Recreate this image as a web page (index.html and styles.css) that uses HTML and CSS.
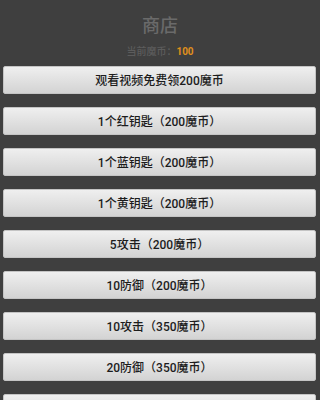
FILE: index.html
```html
<!DOCTYPE html>
<html lang="zh-CN">
<head>
<meta charset="utf-8">
<title>商店</title>
<link rel="stylesheet" href="styles.css">
</head>
<body>
<div class="shop">
  <header class="head">
    <h1 class="title">商店</h1>
    <p class="coins">当前魔币：<span class="amount">100</span></p>
  </header>
  <div class="list">
    <button class="item">观看视频免费领200魔币</button>
    <button class="item">1个红钥匙（200魔币）</button>
    <button class="item">1个蓝钥匙（200魔币）</button>
    <button class="item">1个黄钥匙（200魔币）</button>
    <button class="item">5攻击（200魔币）</button>
    <button class="item">10防御（200魔币）</button>
    <button class="item">10攻击（350魔币）</button>
    <button class="item">20防御（350魔币）</button>
    <button class="item" aria-label="更多"></button>
  </div>
</div>
</body>
</html>
```
FILE: styles.css
```css
html, body {
  margin: 0;
  padding: 0;
  background: #3f3f3f;
  height: 100%;
  overflow: hidden;
}
body {
  font-family: "Noto Sans CJK SC", "Roboto", "Noto Sans", sans-serif;
}
.shop {
  display: flex;
  flex-direction: column;
}
.head {
  display: flex;
  flex-direction: column;
  align-items: center;
  padding-top: 12px;
}
.title {
  margin: 0;
  font-size: 18px;
  line-height: 24px;
  font-weight: 500;
  color: #6a6a6a;
}
.coins {
  margin: 8px 0 0;
  font-size: 10px;
  line-height: 14px;
  color: #5c5c5c;
  font-weight: 500;
}
.amount {
  color: #e0901c;
  font-family: "Roboto", sans-serif;
  font-weight: 700;
}
.list {
  display: flex;
  flex-direction: column;
  gap: 13px;
  padding: 7px 4px 0 3px;
}
.item {
  height: 28px;
  width: 100%;
  margin: 0;
  padding: 2px 0 0;
  border: 1px solid #c4c4c4;
  border-radius: 2px;
  background: linear-gradient(#efefef, #d3d3d3);
  color: #1c1c1c;
  font-family: "Roboto", "Noto Sans CJK SC", sans-serif;
  font-size: 12px;
  font-weight: 500;
  line-height: 20px;
  text-align: center;
}
```
